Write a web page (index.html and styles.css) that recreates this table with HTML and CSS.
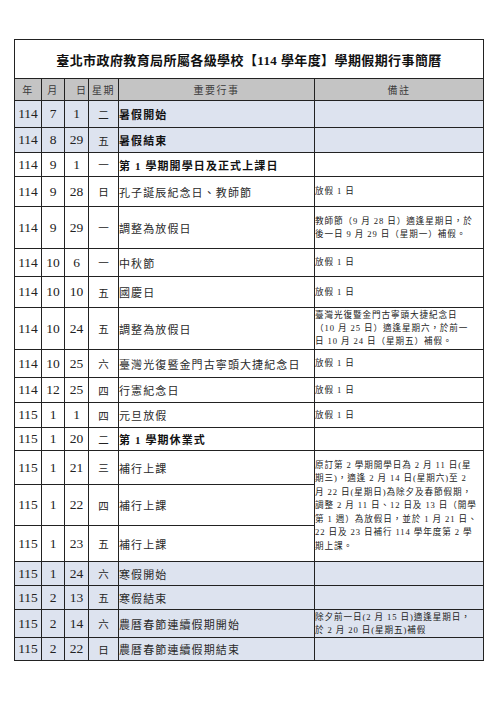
FILE: index.html
```html
<!DOCTYPE html>
<html lang="zh-Hant">
<head>
<meta charset="utf-8">
<title>臺北市政府教育局所屬各級學校【114學年度】學期假期行事簡曆</title>
<link rel="stylesheet" href="styles.css">
</head>
<body>
<table class="cal">
  <colgroup>
    <col class="c-year">
    <col class="c-month">
    <col class="c-day">
    <col class="c-week">
    <col class="c-event">
    <col class="c-note">
  </colgroup>
  <tr class="title-row">
    <td colspan="6" class="title">臺北市政府教育局所屬各級學校【114 學年度】學期假期行事簡曆</td>
  </tr>
  <tr class="head-row">
    <th>年</th><th>月</th><th class="right">日</th><th>星期</th><th>重要行事</th><th>備註</th>
  </tr>
  <tr class="shade h27">
    <td class="num">114</td><td class="num">7</td><td class="num">1</td><td class="wk">二</td><td class="ev b">暑假開始</td><td class="note"></td>
  </tr>
  <tr class="shade h25">
    <td class="num">114</td><td class="num">8</td><td class="num">29</td><td class="wk">五</td><td class="ev b">暑假結束</td><td class="note"></td>
  </tr>
  <tr class="h24">
    <td class="num">114</td><td class="num">9</td><td class="num">1</td><td class="wk">一</td><td class="ev b">第 1 學期開學日及正式上課日</td><td class="note"></td>
  </tr>
  <tr class="h30">
    <td class="num">114</td><td class="num">9</td><td class="num">28</td><td class="wk">日</td><td class="ev">孔子誕辰紀念日、教師節</td><td class="note">放假 1 日</td>
  </tr>
  <tr class="h42">
    <td class="num">114</td><td class="num">9</td><td class="num">29</td><td class="wk">一</td><td class="ev">調整為放假日</td><td class="note">教師節（9 月 28 日）適逢星期日，於<br>後一日 9 月 29 日（星期一）補假。</td>
  </tr>
  <tr class="h28">
    <td class="num">114</td><td class="num">10</td><td class="num">6</td><td class="wk">一</td><td class="ev">中秋節</td><td class="note">放假 1 日</td>
  </tr>
  <tr class="h31">
    <td class="num">114</td><td class="num">10</td><td class="num">10</td><td class="wk">五</td><td class="ev">國慶日</td><td class="note">放假 1 日</td>
  </tr>
  <tr class="h42">
    <td class="num">114</td><td class="num">10</td><td class="num">24</td><td class="wk">五</td><td class="ev">調整為放假日</td><td class="note">臺灣光復暨金門古寧頭大捷紀念日<br>（10 月 25 日）適逢星期六，於前一<br>日 10 月 24 日（星期五）補假。</td>
  </tr>
  <tr class="h28">
    <td class="num">114</td><td class="num">10</td><td class="num">25</td><td class="wk">六</td><td class="ev">臺灣光復暨金門古寧頭大捷紀念日</td><td class="note">放假 1 日</td>
  </tr>
  <tr class="h25">
    <td class="num">114</td><td class="num">12</td><td class="num">25</td><td class="wk">四</td><td class="ev">行憲紀念日</td><td class="note">放假 1 日</td>
  </tr>
  <tr class="h25">
    <td class="num">115</td><td class="num">1</td><td class="num">1</td><td class="wk">四</td><td class="ev">元旦放假</td><td class="note">放假 1 日</td>
  </tr>
  <tr class="h23">
    <td class="num">115</td><td class="num">1</td><td class="num">20</td><td class="wk">二</td><td class="ev b">第 1 學期休業式</td><td class="note"></td>
  </tr>
  <tr class="h34">
    <td class="num">115</td><td class="num">1</td><td class="num">21</td><td class="wk">三</td><td class="ev">補行上課</td>
    <td class="note long" rowspan="3">原訂第 2 學期開學日為 2 月 11 日(星<br>期三)，適逢 2 月 14 日(星期六)至 2<br>月 22 日(星期日)為除夕及春節假期，<br>調整 2 月 11 日、12 日及 13 日（開學<br>第 1 週）為放假日，並於 1 月 21 日、<br>22 日及 23 日補行 114 學年度第 2 學<br>期上課。</td>
  </tr>
  <tr class="h41">
    <td class="num">115</td><td class="num">1</td><td class="num">22</td><td class="wk">四</td><td class="ev">補行上課</td>
  </tr>
  <tr class="h36">
    <td class="num">115</td><td class="num">1</td><td class="num">23</td><td class="wk">五</td><td class="ev">補行上課</td>
  </tr>
  <tr class="shade h24">
    <td class="num">115</td><td class="num">1</td><td class="num">24</td><td class="wk">六</td><td class="ev">寒假開始</td><td class="note"></td>
  </tr>
  <tr class="shade h24">
    <td class="num">115</td><td class="num">2</td><td class="num">13</td><td class="wk">五</td><td class="ev">寒假結束</td><td class="note"></td>
  </tr>
  <tr class="shade h28">
    <td class="num">115</td><td class="num">2</td><td class="num">14</td><td class="wk">六</td><td class="ev">農曆春節連續假期開始</td><td class="note">除夕前一日(2 月 15 日)適逢星期日，<br>於 2 月 20 日(星期五)補假</td>
  </tr>
  <tr class="shade h23">
    <td class="num">115</td><td class="num">2</td><td class="num">22</td><td class="wk">日</td><td class="ev">農曆春節連續假期結束</td><td class="note"></td>
  </tr>
</table>
</body>
</html>
```

FILE: styles.css
```css
html, body {
  margin: 0;
  padding: 0;
  background: #ffffff;
}

body {
  font-family: "Liberation Serif", "Noto Sans CJK TC", serif;
  color: #1e1e1e;
}

.cal {
  margin: 39px 0 0 14px;
  width: 469px;
  border-collapse: collapse;
  table-layout: fixed;
  border: 1.5px solid #222;
}

.c-year { width: 27px; }
.c-month { width: 23px; }
.c-day { width: 24px; }
.c-week { width: 30px; }
.c-event { width: 196px; }
.c-note { width: 169px; }

.cal td,
.cal th {
  border: 1.5px solid #222;
  padding: 0;
  vertical-align: middle;
}

.title-row { height: 39px; }

.title {
  text-align: center;
  font-weight: bold;
  font-size: 13px;
  letter-spacing: 0.4px;
  color: #111;
}

.head-row { height: 22px; background: #c4c4c4; }

.head-row th {
  font-weight: normal;
  font-size: 10px;
  letter-spacing: 1.5px;
  color: #3a3a3a;
  text-align: center;
}

.head-row th.right { text-align: right; padding-right: 2px; letter-spacing: 0; }

.shade { background: #dde3ef; }

.h23 { height: 23px; }
.h24 { height: 24px; }
.h25 { height: 25px; }
.h27 { height: 27px; }
.h28 { height: 28px; }
.h30 { height: 30px; }
.h31 { height: 31px; }
.h34 { height: 34px; }
.h36 { height: 36px; }
.h41 { height: 41px; }
.h42 { height: 42px; }

.num {
  text-align: center;
  font-size: 13.5px;
  color: #222;
}

.wk {
  text-align: center;
  font-size: 10.5px;
  color: #222;
}

.ev {
  padding-left: 2px;
  font-size: 11px;
  letter-spacing: 1.1px;
  color: #2a2a2a;
  white-space: nowrap;
}

.ev.b {
  font-weight: bold;
  color: #111;
}

.note {
  padding-left: 1px;
  font-size: 8.6px;
  letter-spacing: 0.9px;
  line-height: 13px;
  color: #222;
  white-space: nowrap;
}

.note.long {
  line-height: 13.4px;
}
```
